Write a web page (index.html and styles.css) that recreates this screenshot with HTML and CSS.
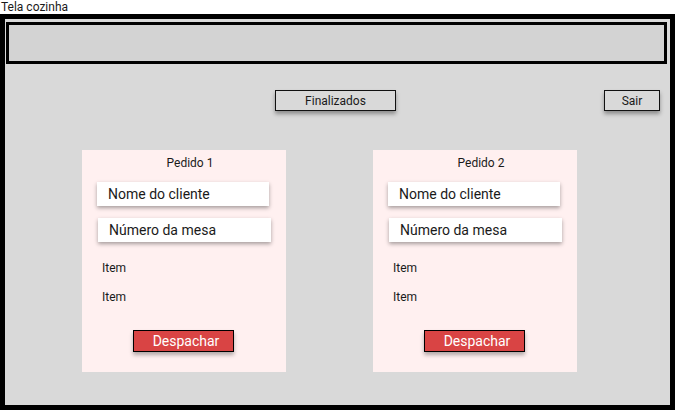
FILE: index.html
```html
<!DOCTYPE html>
<html>
<head>
  <title>Tela cozinha</title>
  <link rel="stylesheet" href="styles.css">
</head>
<body>
  <div class="screen-title">Tela cozinha</div>
  <div class="frame">
    <div class="header-bar"></div>
    <div class="toolbar">
      <button class="btn btn-finalizados">Finalizados</button>
      <button class="btn btn-sair">Sair</button>
    </div>
    <div class="orders">
      <div class="order-card">
        <div class="order-title">Pedido 1</div>
        <div class="field">Nome do cliente</div>
        <div class="field field-mesa">Número da mesa</div>
        <div class="item item-first">Item</div>
        <div class="item">Item</div>
        <button class="btn-despachar">Despachar</button>
      </div>
      <div class="order-card">
        <div class="order-title">Pedido 2</div>
        <div class="field">Nome do cliente</div>
        <div class="field field-mesa">Número da mesa</div>
        <div class="item item-first">Item</div>
        <div class="item">Item</div>
        <button class="btn-despachar">Despachar</button>
      </div>
    </div>
  </div>
</body>
</html>
```

FILE: styles.css
```css
* {
  box-sizing: border-box;
}
body {
  margin: 0;
  font-family: Roboto, "Liberation Sans", Arial, sans-serif;
  color: #1a1a1a;
  width: 675px;
  height: 410px;
  overflow: hidden;
}
.screen-title {
  font-size: 12px;
  line-height: 14px;
  height: 14px;
  padding-left: 1px;
}
.frame {
  height: 396px;
  border: 5px solid #000;
  background: #d9d9d9;
}
.header-bar {
  height: 42px;
  margin: 3px 3px 0 1px;
  border: 3px solid #000;
  background: #d3d3d3;
}
.toolbar {
  display: flex;
  margin-top: 26px;
  padding-left: 270px;
  padding-right: 10px;
}
.btn {
  height: 21px;
  border: 1px solid #111;
  background: #d9d9d9;
  font-family: inherit;
  font-size: 12px;
  color: #1a1a1a;
  padding: 0;
  box-shadow: 0 3px 4px rgba(0, 0, 0, 0.35);
}
.btn-finalizados {
  width: 121px;
}
.btn-sair {
  width: 56px;
  margin-left: auto;
}
.orders {
  display: flex;
  gap: 87px;
  margin-top: 39px;
  padding-left: 77px;
}
.order-card {
  width: 204px;
  height: 222px;
  background: #fff0f0;
  padding-top: 6px;
}
.order-title {
  font-size: 12px;
  line-height: 14px;
  text-align: center;
  padding-left: 12px;
}
.field {
  width: 172px;
  height: 24px;
  margin: 12px 0 0 15px;
  background: #fff;
  font-size: 14px;
  line-height: 24px;
  padding-left: 11px;
  box-shadow: 0 2px 4px rgba(0, 0, 0, 0.35);
}
.field-mesa {
  width: 173px;
  margin-left: 16px;
}
.item {
  font-size: 12px;
  line-height: 14px;
  margin: 15px 0 0 20px;
}
.item-first {
  margin-top: 19px;
}
.btn-despachar {
  display: block;
  width: 101px;
  height: 22px;
  margin: 26px 0 0 51px;
  padding: 0 0 0 5px;
  border: 1px solid #000;
  background: #d94444;
  color: #fff;
  font-family: inherit;
  font-size: 14px;
  box-shadow: 0 3px 4px rgba(0, 0, 0, 0.3);
}
```
